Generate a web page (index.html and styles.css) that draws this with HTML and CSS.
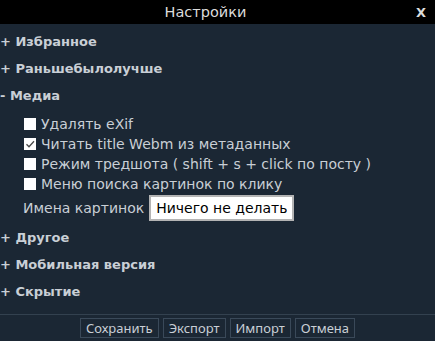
FILE: index.html
```html
<!DOCTYPE html>
<html>

<head>
        <title>Настройки</title>
        <meta charset="UTF-8">
        <meta name="viewport" content="width=device-width, initial-scale=1.0">
        <link rel="stylesheet" href="styles.css">
</head>

<body>
        <div class="settings-window">
                <div class="settings-header">
                        <span class="settings-title">Настройки</span>
                        <span class="settings-close">X</span>
                </div>
                <div class="settings-body">
                        <div class="section-title">+ Избранное</div>
                        <div class="section-title">+ Раньшебылолучше</div>
                        <div class="section-title">- Медиа</div>
                        <div class="section-content">
                                <label class="option"><span class="check-box"></span>Удалять eXif</label>
                                <label class="option"><span class="check-box">
                                        <svg viewBox="0 0 12 12" width="12" height="12">
                                                <path d="M2.5 6.2 L5 8.7 L10 3.2" fill="none" stroke="#4a4a4a" stroke-width="1.3" />
                                        </svg>
                                </span>Читать title Webm из метаданных</label>
                                <label class="option"><span class="check-box"></span>Режим тредшота ( shift + s + click по посту )</label>
                                <label class="option"><span class="check-box"></span>Меню поиска картинок по клику</label>
                                <div class="select-row">
                                        Имена картинок
                                        <select class="names-select">
                                                <option>Ничего не делать</option>
                                        </select>
                                </div>
                        </div>
                        <div class="section-title">+ Другое</div>
                        <div class="section-title">+ Мобильная версия</div>
                        <div class="section-title">+ Скрытие</div>
                </div>
                <div class="settings-footer">
                        <button class="footer-button">Сохранить</button>
                        <button class="footer-button">Экспорт</button>
                        <button class="footer-button">Импорт</button>
                        <button class="footer-button">Отмена</button>
                </div>
        </div>
</body>

</html>
```

FILE: styles.css
```css
body {
    margin: 0px;
    padding: 0px;
    overflow: hidden;
    background-color: #1b2734;
}

.settings-window {
    width: 435px;
    height: 341px;
    display: flex;
    flex-direction: column;
    background-color: #1b2734;
    color: #c9cfd6;
    font-family: "DejaVu Sans", Verdana, sans-serif;
    font-size: 14px;
}

.settings-header {
    height: 24px;
    background-color: #000000;
    color: #dcdcdc;
    font-size: 14.5px;
    display: flex;
    align-items: center;
}

.settings-title {
    flex: 1;
    text-align: center;
}

.settings-close {
    font-weight: bold;
    font-size: 13px;
    padding: 0px 9px 0px 5px;
}

.settings-body {
    flex: 1;
    padding-top: 4px;
}

.section-title {
    font-weight: bold;
    font-size: 13px;
    height: 27px;
    line-height: 27px;
}

.section-content {
    padding-left: 23px;
    padding-top: 5px;
    padding-bottom: 3px;
}

.option {
    display: flex;
    align-items: center;
    height: 20px;
}

.check-box {
    display: inline-block;
    width: 12px;
    height: 12px;
    margin: 0px 5px 0px 1px;
    background-color: #ffffff;
}

.check-box svg {
    display: block;
}

.select-row {
    display: flex;
    align-items: center;
    gap: 5px;
    margin-top: 1px;
}

.names-select {
    appearance: none;
    background-color: #ffffff;
    color: #000000;
    border: 2px solid #b4b4b4;
    font-family: "DejaVu Sans", Verdana, sans-serif;
    font-size: 14px;
    height: 26px;
    width: 145px;
    padding: 0px 5px;
}

.settings-footer {
    border-top: 1px solid #33414f;
    display: flex;
    justify-content: center;
    gap: 4px;
    padding: 3px 0px;
}

.footer-button {
    background-color: #1b2734;
    color: #c9cfd6;
    border: 1px solid #3a4959;
    font-family: "Noto Sans", sans-serif;
    font-size: 13px;
    height: 20px;
    line-height: 16px;
    padding: 0px 5px;
}
```
